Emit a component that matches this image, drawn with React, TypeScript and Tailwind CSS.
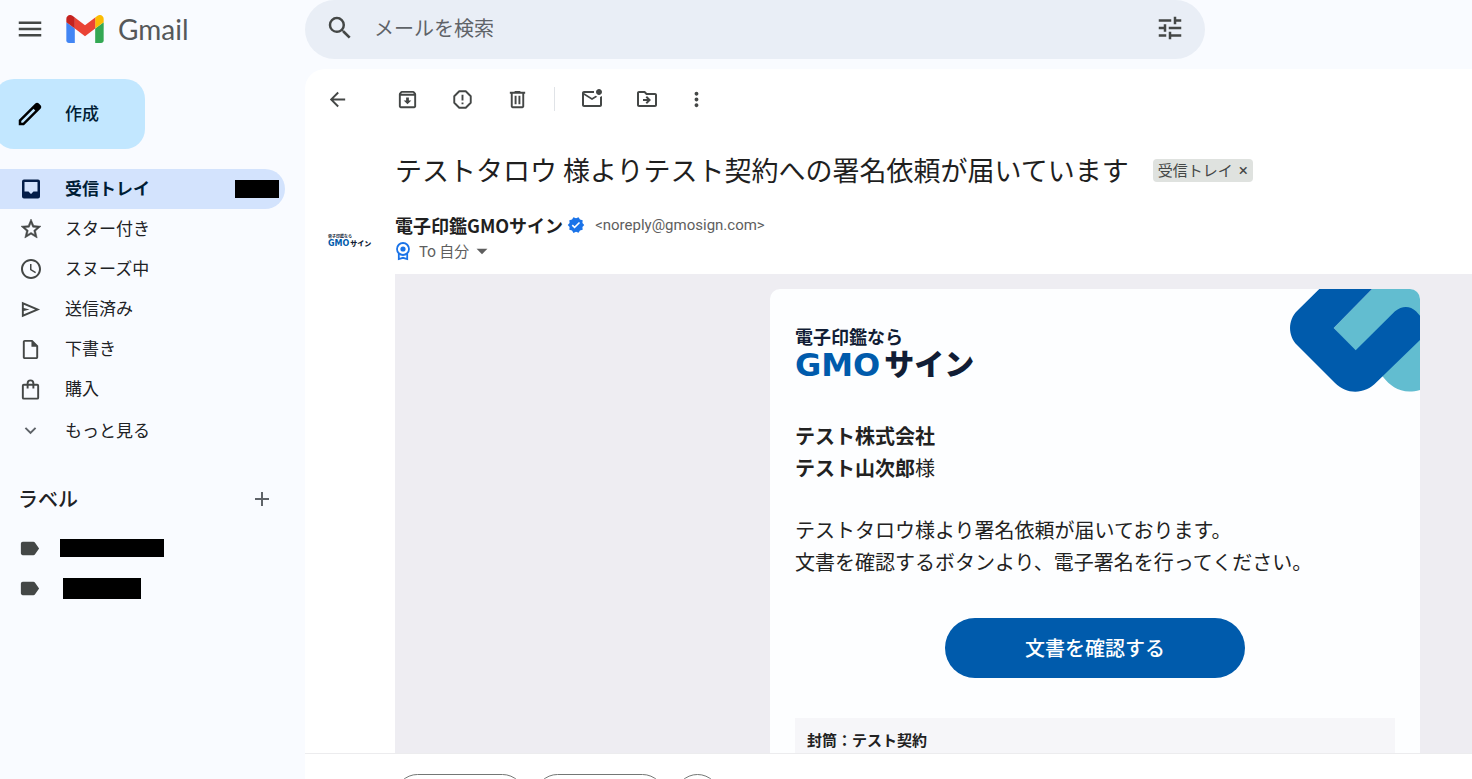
import React from 'react';
import {
  MdMenu,
  MdSearch,
  MdTune,
  MdArrowBack,
  MdOutlineArchive,
  MdOutlineMarkEmailUnread,
  MdOutlineDriveFileMove,
  MdMoreVert,
  MdStarOutline,
  MdAccessTime,
  MdOutlineInsertDriveFile,
  MdExpandMore,
  MdAdd,
  MdLabel,
  MdVerified,
  MdArrowDropDown,
} from 'react-icons/md';

function GmailLogo() {
  return (
    <svg viewBox="52 42 88 66" className="h-7 w-[38px]" aria-hidden="true">
      <path fill="#4285f4" d="M58 108h14V74L52 59v43c0 3.32 2.69 6 6 6" />
      <path fill="#34a853" d="M120 108h14c3.32 0 6-2.69 6-6V59l-20 15" />
      <path fill="#fbbc04" d="M120 48v26l20-15v-8c0-7.42-8.47-11.65-14.4-7.2" />
      <path fill="#ea4335" d="M72 74V48l24 18 24-18v26L96 92" />
      <path fill="#c5221f" d="M52 51v8l20 15V48l-5.6-4.2c-5.94-4.45-14.4-.22-14.4 7.2" />
    </svg>
  );
}

function PencilIcon() {
  return (
    <svg viewBox="0 0 24 24" className="size-[30px]" fill="currentColor" aria-hidden="true">
      <path d="M20.41 4.94l-1.35-1.35c-.78-.78-2.05-.78-2.83 0L3 16.82V21h4.18L20.41 7.77c.79-.78.79-2.05 0-2.83zm-14 14.12L5 19v-1.36l9.82-9.82 1.41 1.41-9.82 9.83z" />
    </svg>
  );
}

function InboxIcon() {
  return (
    <svg viewBox="0 0 24 24" className="size-6" fill="currentColor" fillRule="evenodd" aria-hidden="true">
      <path d="M5 2.500h14a2 2 0 0 1 2 2v15a2 2 0 0 1-2 2H5a2 2 0 0 1-2-2v-15a2 2 0 0 1 2-2zM5.500 5v9.500h4L12 17l2.500-2.500h4V5z" />
    </svg>
  );
}

function SendIcon() {
  return (
    <svg viewBox="0 0 24 24" className="size-[23px]" fill="currentColor" aria-hidden="true">
      <path d="M3 20V4l19 8-19 8Zm2-3 11.85-5L5 7v3.5l6 1.5-6 1.5Z" />
    </svg>
  );
}

function BagIcon() {
  return (
    <svg viewBox="0 0 24 24" className="size-[23px]" fill="none" stroke="currentColor" strokeWidth="2" aria-hidden="true">
      <rect x="4" y="7" width="16" height="14.500" rx="1" />
      <path d="M9 11V5.500a3 3 0 0 1 6 0V11" />
    </svg>
  );
}

function SpamIcon() {
  return (
    <svg viewBox="0 0 24 24" className="size-[23px]" fill="none" stroke="currentColor" strokeWidth="2" strokeLinejoin="round" aria-hidden="true">
      <path d="M8.6 3.4h6.8l5.2 5.2v6.8l-5.2 5.2H8.6l-5.2-5.2V8.6z" />
      <path d="M12 7v6M12 15v2" />
    </svg>
  );
}

function TrashIcon() {
  return (
    <svg viewBox="0 0 24 24" className="size-[23px]" fill="currentColor" aria-hidden="true">
      <path d="M7 21q-.825 0-1.412-.587T5 19V6H4V4h5V3h6v1h5v2h-1v13q0 .825-.587 1.413T17 21zM17 6H7v13h10zM9 17h2V8H9zm4 0h2V8h-2z" />
    </svg>
  );
}

function RibbonIcon() {
  return (
    <svg viewBox="0 0 16 20" className="h-5 w-4" fill="none" stroke="#1a73e8" aria-hidden="true">
      <circle cx="8" cy="8" r="6" strokeWidth="1.8" />
      <circle cx="8" cy="8" r="2.6" fill="#1a73e8" stroke="none" />
      <path d="M3.8 13v5l4.2-1.2 4.2 1.2v-5" strokeWidth="1.8" />
    </svg>
  );
}

function CornerMark() {
  return (
    <svg viewBox="0 0 130 103" className="absolute top-0 right-0 h-[103px] w-[130px]" aria-hidden="true">
      <path fill="#62bdd0" d="M82 0H130V101C112 106 101 98 93.300 88.300L65 62L43.700 39Z" />
      <path
        fill="#005bac"
        d="M29.300 0H82L43.700 39L65.700 61.300L105 22.300C112 16.500 120 16.500 126 22.300L130 26.700V51L86.700 93C75 105.500 57 106 45 94L7 56C-2.300 46.500 -2.300 31.500 7 22Z"
      />
    </svg>
  );
}

const navItems = [
  { label: 'スター付き', icon: <MdStarOutline size={24} stroke="currentColor" strokeWidth={0.5} /> },
  { label: 'スヌーズ中', icon: <MdAccessTime size={24} /> },
  { label: '送信済み', icon: <SendIcon /> },
  { label: '下書き', icon: <MdOutlineInsertDriveFile size={23} /> },
  { label: '購入', icon: <BagIcon /> },
];

function Header() {
  return (
    <header className="flex h-[69px] shrink-0 items-start">
      <div className="flex h-[59px] w-[305px] shrink-0 items-center pb-0.5 pl-[15px]">
        <button type="button" aria-label="メインメニュー" className="text-[#444746]">
          <MdMenu size={30} />
        </button>
        <a href="#" className="ml-[21px] flex items-center gap-3.5 font-[Lato,sans-serif] text-[28px] text-[#55585a]">
          <GmailLogo />
          Gmail
        </a>
      </div>
      <form className="flex h-[59px] max-w-[900px] flex-1 items-center rounded-full bg-[#e9eef6] px-5 pb-1 text-[#444746]">
        <button type="button" aria-label="検索">
          <MdSearch size={30} />
        </button>
        <input
          aria-label="メールを検索"
          placeholder="メールを検索"
          className="ml-[19px] min-w-0 flex-1 bg-transparent text-[20px] outline-none placeholder:text-[#5f6368]"
        />
        <button type="button" aria-label="検索オプション">
          <MdTune size={30} />
        </button>
      </form>
    </header>
  );
}

function Sidebar() {
  return (
    <aside className="w-[305px] shrink-0 pt-2.5 text-[17px] text-[#202124]">
      <button type="button" className="-ml-1.5 flex h-[70px] w-[151px] items-center gap-5 rounded-[20px] bg-[#c2e7ff] pl-[21px] font-medium text-[#001d35]">
        <span className="text-black">
          <PencilIcon />
        </span>
        <span className="pb-0.5">作成</span>
      </button>
      <nav className="mt-5">
        <a href="#" className="flex h-10 w-[285px] items-center rounded-r-full bg-[#d3e3fd] pr-1.5 font-bold text-[#001d35]">
          <span className="flex w-[65px] justify-center pr-1 text-[#041e49]">
            <InboxIcon />
          </span>
          <span className="pb-0.5">受信トレイ</span>
          <span className="ml-auto h-[18px] w-11 bg-black" />
        </a>
        {navItems.map((item) => (
          <a key={item.label} href="#" className="flex h-10 items-center">
            <span className="flex w-[65px] justify-center pr-1 text-[#444746]">{item.icon}</span>
            <span className="pb-0.5">{item.label}</span>
          </a>
        ))}
        <button type="button" className="flex h-[42px] items-center">
          <span className="flex w-[65px] justify-center pr-1 text-[#5f6368]">
            <MdExpandMore size={23} />
          </span>
          もっと見る
        </button>
      </nav>
      <div className="mt-7 flex h-10 items-center justify-between pr-[31px] pl-[18px]">
        <h2 className="text-[20px] font-medium">ラベル</h2>
        <button type="button" aria-label="ラベルを作成" className="text-[#5f6368]">
          <MdAdd size={24} />
        </button>
      </div>
      <div className="mt-[9px] text-[#444746]">
        <a href="#" aria-label="ラベル 1" className="flex h-10 items-center pl-[18px]">
          <MdLabel size={23} />
          <span className="ml-[19px] h-[18px] w-[104px] bg-black" />
        </a>
        <a href="#" aria-label="ラベル 2" className="flex h-10 items-center pl-[18px]">
          <MdLabel size={23} />
          <span className="ml-[22px] h-[21px] w-[78px] bg-black" />
        </a>
      </div>
    </aside>
  );
}

function Toolbar() {
  return (
    <div className="flex h-[60px] shrink-0 items-center pl-[21px] text-[#444746]">
      <button type="button" aria-label="戻る" className="mr-[47px]">
        <MdArrowBack size={23} />
      </button>
      <div className="flex items-center gap-8">
        <button type="button" aria-label="アーカイブ">
          <MdOutlineArchive size={23} />
        </button>
        <button type="button" aria-label="迷惑メールを報告">
          <SpamIcon />
        </button>
        <button type="button" aria-label="削除">
          <TrashIcon />
        </button>
      </div>
      <span className="mx-[25px] h-6 w-px bg-[#e0e3e7]" />
      <button type="button" aria-label="未読にする">
        <MdOutlineMarkEmailUnread size={24} />
      </button>
      <button type="button" aria-label="移動" className="ml-[31px]">
        <MdOutlineDriveFileMove size={24} />
      </button>
      <button type="button" aria-label="その他" className="ml-[26px]">
        <MdMoreVert size={23} />
      </button>
    </div>
  );
}

function MailCard() {
  return (
    <article className="relative w-[650px] shrink-0 overflow-hidden rounded-t-[10px] bg-[#fdfeff] px-[25px] pt-[37px] text-[20px] leading-8 text-[#222]">
      <CornerMark />
      <div className="font-bold text-[#111d35]">
        <div className="text-[18px] leading-5">電子印鑑なら</div>
        <div className="flex h-9 items-center gap-1">
          <span className="pt-0.5 font-['DejaVu_Sans',sans-serif] text-[32px] leading-none text-[#005bac]">GMO</span>
          <span className="pb-1 text-[30px] leading-none font-black">サイン</span>
        </div>
      </div>
      <p className="mt-[38px]">
        <b>テスト株式会社</b>
        <br />
        <b>テスト山次郎</b>様
      </p>
      <p className="mt-[30px]">
        テストタロウ様より署名依頼が届いております。
        <br />
        文書を確認するボタンより、電子署名を行ってください。
      </p>
      <a href="#" className="mx-auto mt-10 flex h-[60px] w-[300px] items-center justify-center rounded-full bg-[#005bac] font-medium text-white">
        文書を確認する
      </a>
      <div className="mt-10 bg-[#f6f6f9] px-3 py-1.5 text-[15px] font-bold">封筒：テスト契約</div>
    </article>
  );
}

function Message() {
  return (
    <main className="flex min-w-0 flex-1 flex-col overflow-hidden rounded-tl-[20px] bg-white">
      <Toolbar />
      <div className="flex min-h-0 flex-1 flex-col overflow-hidden">
        <div className="flex h-[82px] shrink-0 items-center pl-[90px]">
          <h1 className="text-[27px] whitespace-nowrap text-[#1f1f1f]">
            テストタロウ 様よりテスト契約への署名依頼が届いています
          </h1>
          <span className="ml-6 flex h-[23px] items-center gap-1.5 rounded bg-[#dfe2df] px-[5px] text-[15px] whitespace-nowrap text-[#444746]">
            受信トレイ
            <button type="button" aria-label="ラベルを削除" className="font-[Roboto,sans-serif] text-[17px] leading-none">
              ×
            </button>
          </span>
        </div>
        <div className="flex h-[63px] shrink-0">
          <div className="flex w-[90px] shrink-0 flex-col gap-px pt-[22px] pl-[23px] font-bold text-[#111d35]">
            <span className="text-[4px] leading-[6px]">電子印鑑なら</span>
            <span className="flex items-center gap-px text-[7px] leading-[7px]">
              <span className="font-['DejaVu_Sans',sans-serif] text-[8px] text-[#005bac]">GMO</span>
              <span className="font-black">サイン</span>
            </span>
          </div>
          <div className="text-[15px] text-[#5e5e5e]">
            <div className="flex h-7 items-center">
              <b className="text-[18px] text-[#1f1f1f]">電子印鑑GMOサイン</b>
              <MdVerified size={18} className="mr-2.5 ml-1 text-[#1a73e8]" />
              <span className="font-[Roboto,sans-serif]">&lt;noreply@gmosign.com&gt;</span>
            </div>
            <div className="flex h-6 items-center">
              <RibbonIcon />
              <span className="ml-2">To 自分</span>
              <button type="button" aria-label="詳細を表示">
                <MdArrowDropDown size={26} />
              </button>
            </div>
          </div>
        </div>
        <div className="ml-[90px] flex flex-1 justify-end overflow-hidden bg-[#eeedf2] pt-[15px] pr-[52px]">
          <MailCard />
        </div>
      </div>
      <footer className="flex h-[26px] shrink-0 items-start gap-2.5 overflow-hidden border-t border-[#ececee] pt-5 pl-[90px]">
        <button type="button" aria-label="返信" className="h-[45px] w-[130px] shrink-0 rounded-full border border-[#747775]" />
        <button type="button" aria-label="転送" className="h-[45px] w-[130px] shrink-0 rounded-full border border-[#747775]" />
        <button type="button" aria-label="絵文字" className="size-[45px] shrink-0 rounded-full border border-[#747775]" />
      </footer>
    </main>
  );
}

export default function App() {
  return (
    <div lang="ja" className="flex h-screen flex-col overflow-hidden bg-[#f9fbff] font-['Noto_Sans_CJK_JP',sans-serif]">
      <Header />
      <div className="flex min-h-0 flex-1">
        <Sidebar />
        <Message />
      </div>
    </div>
  );
}
